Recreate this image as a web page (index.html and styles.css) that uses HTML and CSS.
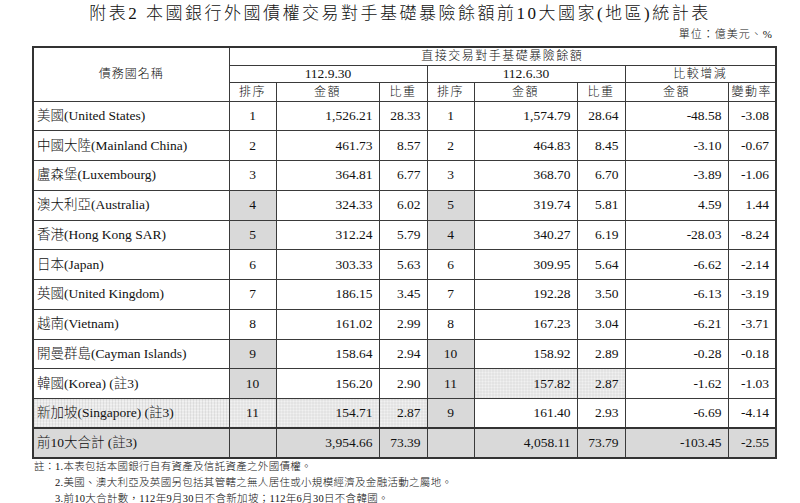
FILE: index.html
```html
<!DOCTYPE html>
<html lang="zh-Hant">
<head>
<meta charset="utf-8">
<title>附表2</title>
<link rel="stylesheet" href="styles.css">
</head>
<body>
<div class="page">
  <h1 class="title">附表2 本國銀行外國債權交易對手基礎暴險餘額前10大國家(地區)統計表</h1>
  <div class="unit">單位：億美元、%</div>
  <table class="stats">
    <colgroup>
      <col class="c-name"><col class="c-rank"><col class="c-amt"><col class="c-pct">
      <col class="c-rank"><col class="c-amt"><col class="c-pct">
      <col class="c-amt"><col class="c-pct">
    </colgroup>
    <thead>
      <tr class="hr1">
        <th rowspan="3" class="name-h">債務國名稱</th>
        <th colspan="8" class="cjk-h">直接交易對手基礎暴險餘額</th>
      </tr>
      <tr class="hr2">
        <th colspan="3">112.9.30</th>
        <th colspan="3">112.6.30</th>
        <th colspan="2" class="cjk-h">比較增減</th>
      </tr>
      <tr class="hr3">
        <th class="cjk-h">排序</th><th class="cjk-h">金額</th><th class="cjk-h">比重</th>
        <th class="cjk-h">排序</th><th class="cjk-h">金額</th><th class="cjk-h">比重</th>
        <th class="cjk-h">金額</th><th class="cjk-h">變動率</th>
      </tr>
    </thead>
    <tbody>
      <tr><td class="name">美國(United States)</td><td class="rank">1</td><td class="num">1,526.21</td><td class="num">28.33</td><td class="rank">1</td><td class="num">1,574.79</td><td class="num">28.64</td><td class="num">-48.58</td><td class="num">-3.08</td></tr>
      <tr><td class="name">中國大陸(Mainland China)</td><td class="rank">2</td><td class="num">461.73</td><td class="num">8.57</td><td class="rank">2</td><td class="num">464.83</td><td class="num">8.45</td><td class="num">-3.10</td><td class="num">-0.67</td></tr>
      <tr><td class="name">盧森堡(Luxembourg)</td><td class="rank">3</td><td class="num">364.81</td><td class="num">6.77</td><td class="rank">3</td><td class="num">368.70</td><td class="num">6.70</td><td class="num">-3.89</td><td class="num">-1.06</td></tr>
      <tr><td class="name">澳大利亞(Australia)</td><td class="rank shade">4</td><td class="num">324.33</td><td class="num">6.02</td><td class="rank shade">5</td><td class="num">319.74</td><td class="num">5.81</td><td class="num">4.59</td><td class="num">1.44</td></tr>
      <tr><td class="name">香港(Hong Kong SAR)</td><td class="rank shade">5</td><td class="num">312.24</td><td class="num">5.79</td><td class="rank shade">4</td><td class="num">340.27</td><td class="num">6.19</td><td class="num">-28.03</td><td class="num">-8.24</td></tr>
      <tr><td class="name">日本(Japan)</td><td class="rank">6</td><td class="num">303.33</td><td class="num">5.63</td><td class="rank">6</td><td class="num">309.95</td><td class="num">5.64</td><td class="num">-6.62</td><td class="num">-2.14</td></tr>
      <tr><td class="name">英國(United Kingdom)</td><td class="rank">7</td><td class="num">186.15</td><td class="num">3.45</td><td class="rank">7</td><td class="num">192.28</td><td class="num">3.50</td><td class="num">-6.13</td><td class="num">-3.19</td></tr>
      <tr><td class="name">越南(Vietnam)</td><td class="rank">8</td><td class="num">161.02</td><td class="num">2.99</td><td class="rank">8</td><td class="num">167.23</td><td class="num">3.04</td><td class="num">-6.21</td><td class="num">-3.71</td></tr>
      <tr><td class="name">開曼群島(Cayman Islands)</td><td class="rank shade">9</td><td class="num">158.64</td><td class="num">2.94</td><td class="rank shade">10</td><td class="num">158.92</td><td class="num">2.89</td><td class="num">-0.28</td><td class="num">-0.18</td></tr>
      <tr><td class="name">韓國(Korea) (註3)</td><td class="rank shade">10</td><td class="num">156.20</td><td class="num">2.90</td><td class="rank shade">11</td><td class="num dots">157.82</td><td class="num dots">2.87</td><td class="num">-1.62</td><td class="num">-1.03</td></tr>
      <tr><td class="name dots">新加坡(Singapore) (註3)</td><td class="rank dots">11</td><td class="num dots">154.71</td><td class="num dots">2.87</td><td class="rank shade">9</td><td class="num">161.40</td><td class="num">2.93</td><td class="num">-6.69</td><td class="num">-4.14</td></tr>
      <tr class="total"><td class="name">前10大合計 (註3)</td><td class="rank"></td><td class="num">3,954.66</td><td class="num">73.39</td><td class="rank"></td><td class="num">4,058.11</td><td class="num">73.79</td><td class="num">-103.45</td><td class="num">-2.55</td></tr>
    </tbody>
  </table>
  <div class="notes">
    <span class="note-label">註：</span>
    <div class="note-items">
      <div>1.本表包括本國銀行自有資產及信託資產之外國債權。</div>
      <div>2.美國、澳大利亞及英國另包括其管轄之無人居住或小規模經濟及金融活動之屬地。</div>
      <div>3.前10大合計數，112年9月30日不含新加坡；112年6月30日不含韓國。</div>
    </div>
  </div>
</div>
</body>
</html>
```

FILE: styles.css
```css
html, body {
  margin: 0;
  padding: 0;
  background: #ffffff;
}

.page {
  width: 800px;
  height: 503px;
  overflow: hidden;
  font-family: "Liberation Serif", "Noto Sans CJK TC", serif;
  font-weight: 300;
  color: #111;
}

.title {
  margin: 0;
  height: 28px;
  line-height: 28px;
  font-size: 17px;
  font-weight: 300;
  letter-spacing: 2.5px;
  text-align: center;
  white-space: nowrap;
}

.unit {
  height: 12px;
  line-height: 12px;
  font-size: 11px;
  letter-spacing: 1px;
  text-align: right;
  padding-right: 27px;
}

.stats {
  margin: 6px 0 0 32px;
  width: 742px;
  border-collapse: collapse;
  table-layout: fixed;
  border: 2px solid #333;
  font-size: 13.5px;
}

.c-name { width: 196px; }
.c-rank { width: 47px; }
.c-amt { width: 103px; }
.c-pct { width: 48px; }

.stats th,
.stats td {
  border: 1px solid #3a3a3a;
  padding: 0;
  white-space: nowrap;
  overflow: hidden;
}

.stats th {
  font-weight: 300;
  font-size: 13.5px;
  text-align: center;
  line-height: 14px;
}

.stats .cjk-h {
  font-size: 12px;
  letter-spacing: 1.5px;
}

.stats .name-h {
  font-size: 12px;
  letter-spacing: 1px;
}

.hr1 { height: 18px; }
.hr2 { height: 17px; }
.hr3 { height: 19px; }

.stats tbody tr { height: 29.75px; }

.stats td { line-height: 16px; }

.stats .name {
  text-align: left;
  padding-left: 3px;
}

.stats .rank { text-align: center; }

.stats .num {
  text-align: right;
  padding-right: 6px;
}

.stats .shade { background: #d9d9d9; }

.stats .dots {
  background-color: #f1f1f1;
  background-image:
    repeating-linear-gradient(90deg, rgba(0,0,0,0.06) 0 1px, transparent 1px 3px),
    repeating-linear-gradient(0deg, rgba(0,0,0,0.06) 0 1px, transparent 1px 3px);
}

.stats .total td {
  background: #d9d9d9;
  border-top: 2px solid #333;
}

.notes {
  display: flex;
  padding-left: 34px;
  font-size: 10.5px;
  line-height: 16px;
  letter-spacing: 0.3px;
}

.note-label { flex: none; letter-spacing: 0; }
```
